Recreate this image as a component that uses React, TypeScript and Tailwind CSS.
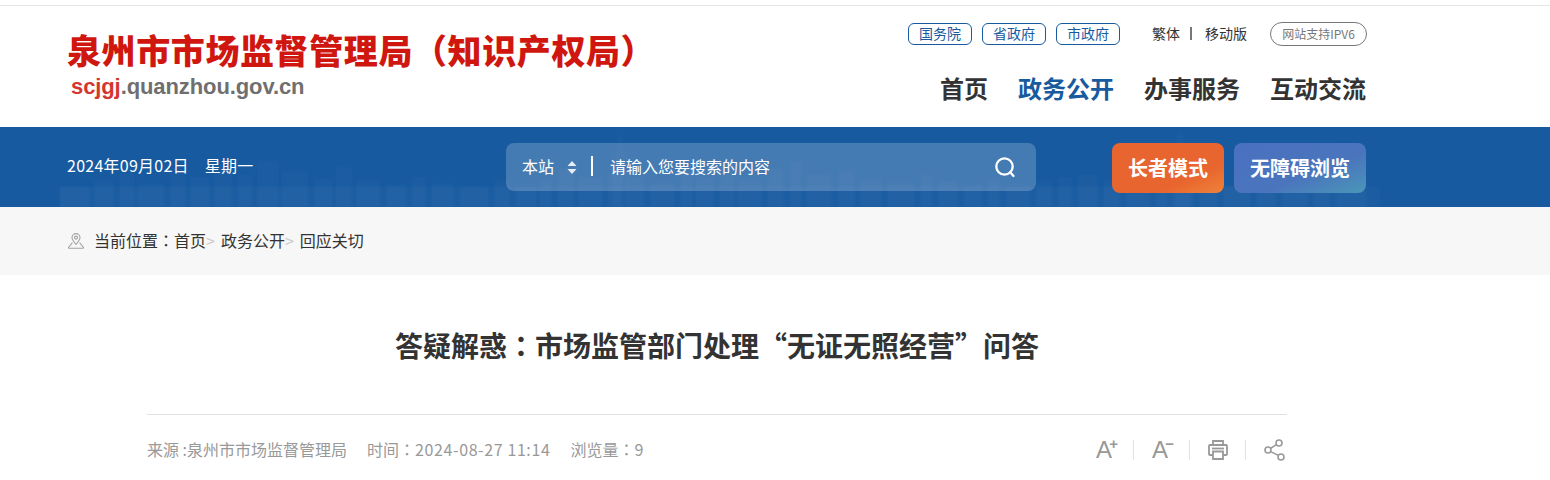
const cjk = { fontFamily: '"Noto Sans CJK SC", "Noto Sans", sans-serif' };

const govLinks = ["国务院", "省政府", "市政府"];
const navLinks = [
  { label: "首页", active: false },
  { label: "政务公开", active: true },
  { label: "办事服务", active: false },
  { label: "互动交流", active: false },
];

// faint skyline behind the blue band: x, height, width
const towers = [
  [0, 20, 30], [34, 26, 20], [60, 34, 14], [78, 24, 26], [110, 38, 16], [130, 30, 20], [154, 42, 18], [178, 32, 14],
  [198, 46, 20], [222, 36, 26], [254, 28, 18], [276, 40, 16], [296, 26, 24], [326, 22, 20], [352, 30, 14], [372, 24, 22],
  [400, 20, 28], [434, 26, 16], [456, 20, 20], [480, 28, 12], [498, 38, 16], [518, 30, 24], [548, 34, 14], [566, 30, 18],
  [590, 24, 24], [620, 36, 12], [636, 30, 18], [660, 44, 14], [678, 28, 24], [708, 38, 16], [730, 46, 12], [746, 32, 26],
  [778, 36, 16], [800, 28, 22], [828, 24, 26], [860, 32, 12], [878, 26, 20], [904, 22, 18], [928, 28, 12], [946, 20, 24],
  [976, 26, 16], [998, 30, 14], [1018, 32, 20], [1044, 26, 16], [1066, 24, 24], [1096, 44, 12], [1114, 30, 20], [1140, 26, 18],
  [1164, 22, 26], [1196, 24, 20], [1222, 18, 26], [1254, 22, 16], [1276, 16, 30],
];

const Skyline = () => (
  <svg className="absolute left-[60px] top-0 h-[80px] w-[1320px] opacity-60 blur-[1px]" viewBox="0 0 1320 80" fill="none">
    <defs>
      <pattern id="windows" width="3" height="3" patternUnits="userSpaceOnUse">
        <rect width="2" height="2" fill="#ffffff" fillOpacity="0.05" />
        <rect width="3" height="3" fill="#ffffff" fillOpacity="0.015" />
      </pattern>
    </defs>
    {towers.map(([x, h, w]) => (
      <rect key={x} x={x} y={80 - h} width={w} height={h} fill="url(#windows)" />
    ))}
    <rect x="0" y="60" width="1320" height="20" fill="url(#windows)" />
    <path d="M553 80V32l4-16 3-14 3 14 4 16v48z" fill="#ffffff" fillOpacity="0.03" />
    <path d="M1110 80V34l5-20 5-14 5 14 5 20v46z" fill="#ffffff" fillOpacity="0.03" />
  </svg>
);

const PinIcon = () => (
  <svg width="18" height="18" viewBox="0 0 18 18" fill="none" stroke="#a3a3a3" strokeWidth="1.1">
    <path d="M9 12.5C6.6 9.8 5 8 5 5.6a4 4 0 0 1 8 0C13 8 11.4 9.8 9 12.5z" />
    <circle cx="9" cy="5.6" r="1.5" />
    <path d="M5.4 10.6 1.6 15.2c-.3.5 0 1 .6 1h13.6c.6 0 .9-.5.6-1l-3.8-4.6" />
  </svg>
);

const SearchIcon = () => (
  <svg width="22" height="22" viewBox="0 0 22 22" fill="none" stroke="#ffffff" strokeWidth="2.3">
    <circle cx="10.5" cy="10.5" r="8.2" />
    <path d="M16.4 16.4 19.5 20" strokeLinecap="round" />
  </svg>
);

const PrintIcon = () => (
  <svg width="21" height="22" viewBox="0 0 21 22" fill="none" stroke="#999999" strokeWidth="1.8">
    <path d="M6 6V2h10v4" />
    <path d="M6 16H2.8A1 1 0 0 1 2 15V7a1 1 0 0 1 1-1h16a1 1 0 0 1 1 1v8a1 1 0 0 1-1 1h-3" />
    <path d="M6 12.5h10V20H6z" />
    <path d="M5 9.5h12" />
  </svg>
);

const ShareIcon = () => (
  <svg width="22" height="22" viewBox="0 0 22 22" fill="none" stroke="#999999" strokeWidth="1.6">
    <circle cx="5" cy="11" r="3" />
    <circle cx="16" cy="4" r="3" />
    <circle cx="18" cy="18" r="3" />
    <path d="M7.6 9.4 13.4 5.6M7.6 12.6l7.8 3.8" />
  </svg>
);

const Divider = () => <span className="h-[20px] w-px bg-[#e2e2e2]" />;

const FontSize = ({ sign }: { sign: string }) => (
  <span className="relative flex h-[24px] w-[21px] items-end pl-[1px] text-[24px] leading-[24px] text-[#999999]" style={{ fontFamily: '"Liberation Sans", sans-serif' }}>
    A
    <span className="absolute -right-[2px] -top-[2px] text-[15px] leading-[15px] font-bold">{sign}</span>
  </span>
);

// SC draws the full-width colon low and to the left, the reference has it centred
const Colon = () => <span style={{ fontFamily: '"Noto Sans CJK TC", sans-serif' }}>：</span>;

export default function App() {
  return (
    <div className="h-[480px] w-[1550px] overflow-hidden bg-white text-[#333333]" style={cjk}>
      <div className="mt-[5px] h-px bg-[#e6e6e6]" />

      <header className="h-[121px] pl-[67px]">
        <div className="flex w-[1300px] justify-between">
          <div className="pt-[22px]">
            <h1 className="text-[34px] leading-[44px] font-black tracking-[0.6px] whitespace-nowrap text-[#d0170f]">
              泉州市市场监督管理局（知识产权局）
            </h1>
            <p className="ml-[4px] mt-[1px] text-[22px] leading-[28px] font-bold tracking-[-0.1px]" style={{ fontFamily: '"Liberation Sans", sans-serif' }}>
              <span className="text-[#d4362f]">scjgj</span>
              <span className="text-[#6f6f6f]">.quanzhou.gov.cn</span>
            </p>
          </div>

          <div className="flex flex-col items-end pt-[16px]">
            <div className="flex items-center">
              <div className="flex gap-[10px]">
                {govLinks.map((item) => (
                  <a key={item} className="flex h-[22px] w-[64px] items-center justify-center rounded-[6px] border border-[#175a9e] pb-[1px] text-[14px] text-[#175a9e]">
                    {item}
                  </a>
                ))}
              </div>
              <div className="ml-[32px] flex items-center pb-[1px] text-[14px] text-[#333333]">
                <span>繁体</span>
                <span className="mr-[13px] ml-[10px] h-[13px] w-[2px] bg-[#777777]" />
                <span>移动版</span>
              </div>
              <span className="ml-[23px] flex h-[24px] w-[97px] items-center justify-center rounded-full border border-[#777777] text-[12px] text-[#777777]">
                网站支持IPV6
              </span>
            </div>
            <nav className="mt-[24px] flex gap-[30px] pr-[1px] text-[24px] leading-[36px] font-bold">
              {navLinks.map((link) => (
                <a key={link.label} className={link.active ? "text-[#175a9e]" : "text-[#333333]"}>
                  {link.label}
                </a>
              ))}
            </nav>
          </div>
        </div>
      </header>

      <div className="relative h-[80px] bg-[#175aa0]">
        <Skyline />
        <div className="relative ml-[67px] flex h-full w-[1300px] items-center">
          <div className="w-[439px] -translate-y-[2px] text-[16px] tracking-[0.25px] text-white">
            <span>2024年09月02日</span>
            <span className="ml-[16px]">星期一</span>
          </div>
          <div className="flex h-[48px] w-[530px] items-center rounded-[8px] bg-white/20 pr-[20px] pl-[16px] text-[16px] text-white">
            <span className="-translate-y-[1px]">本站</span>
            <svg className="ml-[13px]" width="10" height="15" viewBox="0 0 10 15" fill="#e8eef6">
              <path d="M5 1 9.5 6H.5zM5 14 .5 9h9z" />
            </svg>
            <span className="ml-[14px] h-[20px] w-[2px] -translate-y-[1px] bg-white" />
            <span className="ml-[17px] flex-1 -translate-y-[1px]">请输入您要搜索的内容</span>
            <SearchIcon />
          </div>
          <a className="mt-[1px] ml-[76px] flex h-[50px] w-[112px] items-center justify-center rounded-[8px] bg-gradient-to-br from-[#e8652f] via-[#e8652f] via-70% to-[#ef8239] pt-[1px] text-[20px] font-bold text-white">
            长者模式
          </a>
          <a className="mt-[1px] ml-[10px] flex h-[50px] w-[132px] items-center justify-center rounded-[8px] bg-gradient-to-br from-[#4a70bf] via-[#4a75bd] via-60% to-[#4a96b8] pt-[1px] text-[20px] font-bold text-white">
            无障碍浏览
          </a>
        </div>
      </div>

      <div className="flex h-[68px] items-center bg-[#f7f7f7] pl-[67px] text-[16px] text-[#333333]">
        <PinIcon />
        <span className="ml-[9px] -translate-y-[1px]">当前位置<Colon />首页</span>
        <span className="-translate-y-[1px] text-[#cccccc]">&gt;</span>
        <span className="ml-[6px] -translate-y-[1px]">政务公开</span>
        <span className="-translate-y-[1px] text-[#cccccc]">&gt;</span>
        <span className="ml-[6px] -translate-y-[1px]">回应关切</span>
      </div>

      <main className="ml-[147px] w-[1140px]">
        <h2 className="mt-[47px] text-center text-[28px] leading-[46px] font-bold text-[#333333]">
          答疑解惑<Colon />市场监管部门处理“无证无照经营”问答
        </h2>
        <div className="mt-[46px] flex h-[71px] items-center justify-between border-t border-[#e2e2e2] text-[16px] text-[#999999]">
          <div className="flex -translate-y-[1px] gap-[20px]">
            <span>来源 :泉州市市场监督管理局</span>
            <span>时间<Colon /><span className="tracking-[0.6px]">2024-08-27 11:14</span></span>
            <span>浏览量<Colon />9</span>
          </div>
          <div className="flex items-center gap-[17px] pr-[2px]">
            <FontSize sign="+" />
            <Divider />
            <FontSize sign="−" />
            <Divider />
            <PrintIcon />
            <Divider />
            <ShareIcon />
          </div>
        </div>
      </main>
    </div>
  );
}
